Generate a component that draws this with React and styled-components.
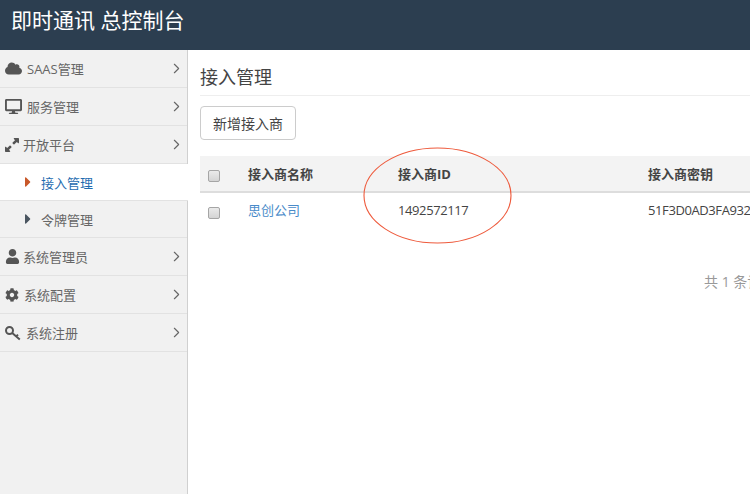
import React from "react";
import styled, { createGlobalStyle } from "styled-components";
import { FaCloud, FaDesktop, FaUser, FaCog, FaCaretRight } from "react-icons/fa";
import { FaUpRightAndDownLeftFromCenter } from "react-icons/fa6";
import { FiChevronRight } from "react-icons/fi";

const GlobalStyle = createGlobalStyle`
  html, body {
    margin: 0;
    height: 494px;
    overflow: hidden;
    background: #fff;
    font-family: "Open Sans", "Noto Sans CJK SC", sans-serif;
    font-size: 13px;
    color: #555;
  }
`;

const Header = styled.header`
  height: 50px;
  background: #2c3e50;
  color: #fff;
  font-size: 21px;
  line-height: 40px;
  padding-left: 11px;
  box-sizing: border-box;
`;

const Body = styled.div`
  display: flex;
  height: 444px;
  overflow: hidden;
`;

const Sidebar = styled.nav`
  width: 187px;
  flex: none;
  background: #f1f1f1;
  border-right: 1px solid #d0d0d0;
`;

const MenuItem = styled.div`
  height: 38px;
  box-sizing: border-box;
  border-bottom: 1px solid #e2e2e2;
  display: flex;
  align-items: center;
  padding: 0 2px 0 5px;
  color: #666;
`;

const LeadIcon = styled.span`
  display: flex;
  flex: none;
  color: #555;
  font-size: ${(p) => p.$size}px;
`;

const MenuLabel = styled.span`
  flex: 1;
  margin-left: ${(p) => p.$gap}px;
`;

const Arrow = styled(FiChevronRight)`
  font-size: 17px;
  color: #666;
  flex: none;
  stroke-width: 1.6;
`;

const SubItem = styled.div`
  height: ${(p) => p.$height}px;
  box-sizing: border-box;
  border-bottom: 1px solid #e2e2e2;
  display: flex;
  align-items: center;
  padding-left: 20px;
  gap: 5px;
  margin-right: ${(p) => (p.$active ? "-1px" : "0")};
  background: ${(p) => (p.$active ? "#fff" : "transparent")};
  color: ${(p) => (p.$active ? "#1f6cb0" : "#666")};
  position: relative;
  svg {
    font-size: 16px;
    color: ${(p) => (p.$active ? "#c8582a" : "#4a5560")};
  }
`;

const Main = styled.main`
  flex: none;
  width: 640px;
  padding: 0 0 0 12px;
  position: relative;
`;

const Title = styled.h2`
  margin: 0 0 10px;
  height: 46px;
  box-sizing: border-box;
  border-bottom: 1px solid #eee;
  font-size: 18px;
  font-weight: 400;
  line-height: 55px;
  color: #444;
`;

const AddButton = styled.button`
  display: block;
  width: 96px;
  height: 34px;
  background: #fff;
  border: 1px solid #ccc;
  border-radius: 4px;
  font: inherit;
  font-size: 14px;
  color: #444;
  padding: 0;
  margin-bottom: 16px;
`;

const Row = styled.div`
  display: grid;
  grid-template-columns: 48px 150px 250px 1fr;
  align-items: center;
  height: ${(p) => p.$height}px;
  box-sizing: border-box;
  white-space: nowrap;
  background: ${(p) => (p.$head ? "#f3f3f3" : "#fff")};
  border-bottom: ${(p) => (p.$head ? "2px solid #ddd" : "none")};
  font-weight: ${(p) => (p.$head ? 700 : 400)};
  color: #444;
  overflow: hidden;
`;

const Check = styled.span`
  display: block;
  width: 10px;
  height: 10px;
  margin: 5px 0 0 8px;
  border: 1px solid #a5a5a5;
  border-radius: 2px;
  background: linear-gradient(#eaeaea, #d4d4d4);
`;

const CompanyLink = styled.a`
  color: #4a8bc9;
  margin-top: -2px;
`;

const Mono = styled.span`
  letter-spacing: -0.4px;
`;

const Total = styled.div`
  margin-top: 44px;
  margin-left: 504px;
  white-space: nowrap;
  color: #999;
  font-size: 14px;
`;

const Annotation = styled.svg`
  position: absolute;
  left: 175px;
  top: 97px;
  pointer-events: none;
`;

// FontAwesome's key points the other way and has a filled head, so it is drawn here
const KeyIcon = () => (
  <svg width="16" height="16" viewBox="0 0 16 16" fill="none" stroke="currentColor" strokeWidth="2">
    <circle cx="4.5" cy="5.5" r="3.5" />
    <path d="M7.2 8 L14.8 14.4 M11.2 11.4 L13 9.6" />
  </svg>
);

const menuTop = [
  { icon: FaCloud, label: "SAAS管理", gap: 5, size: 17 },
  { icon: FaDesktop, label: "服务管理", gap: 5, size: 17 },
  { icon: FaUpRightAndDownLeftFromCenter, label: "开放平台", gap: 4, size: 14 },
];

const menuBottom = [
  { icon: FaUser, label: "系统管理员", gap: 3, size: 15 },
  { icon: FaCog, label: "系统配置", gap: 5, size: 14 },
  { icon: KeyIcon, label: "系统注册", gap: 5, size: 16 },
];

function Menu({ items }) {
  return items.map(({ icon: Icon, label, gap, size }) => (
    <MenuItem key={label}>
      <LeadIcon $size={size}>
        <Icon />
      </LeadIcon>
      <MenuLabel $gap={gap}>{label}</MenuLabel>
      <Arrow />
    </MenuItem>
  ));
}

export default function App() {
  return (
    <>
      <GlobalStyle />
      <Header>即时通讯 总控制台</Header>
      <Body>
        <Sidebar>
          <Menu items={menuTop} />
          <SubItem $active $height={37}>
            <FaCaretRight />
            接入管理
          </SubItem>
          <SubItem $height={37}>
            <FaCaretRight />
            令牌管理
          </SubItem>
          <Menu items={menuBottom} />
        </Sidebar>
        <Main>
          <Title>接入管理</Title>
          <AddButton>新增接入商</AddButton>
          <Row $head $height={37}>
            <Check />
            <span>接入商名称</span>
            <span>接入商ID</span>
            <span>接入商密钥</span>
          </Row>
          <Row $height={34}>
            <Check />
            <CompanyLink>思创公司</CompanyLink>
            <Mono>1492572117</Mono>
            <Mono>51F3D0AD3FA9321C7E</Mono>
          </Row>
          <Total>共 1 条记录</Total>
          <Annotation width="150" height="98" viewBox="0 0 150 98">
            <ellipse cx="74.5" cy="48.5" rx="73.5" ry="47.5" fill="none" stroke="#ee5a3c" strokeWidth="1.1" />
          </Annotation>
        </Main>
      </Body>
    </>
  );
}
